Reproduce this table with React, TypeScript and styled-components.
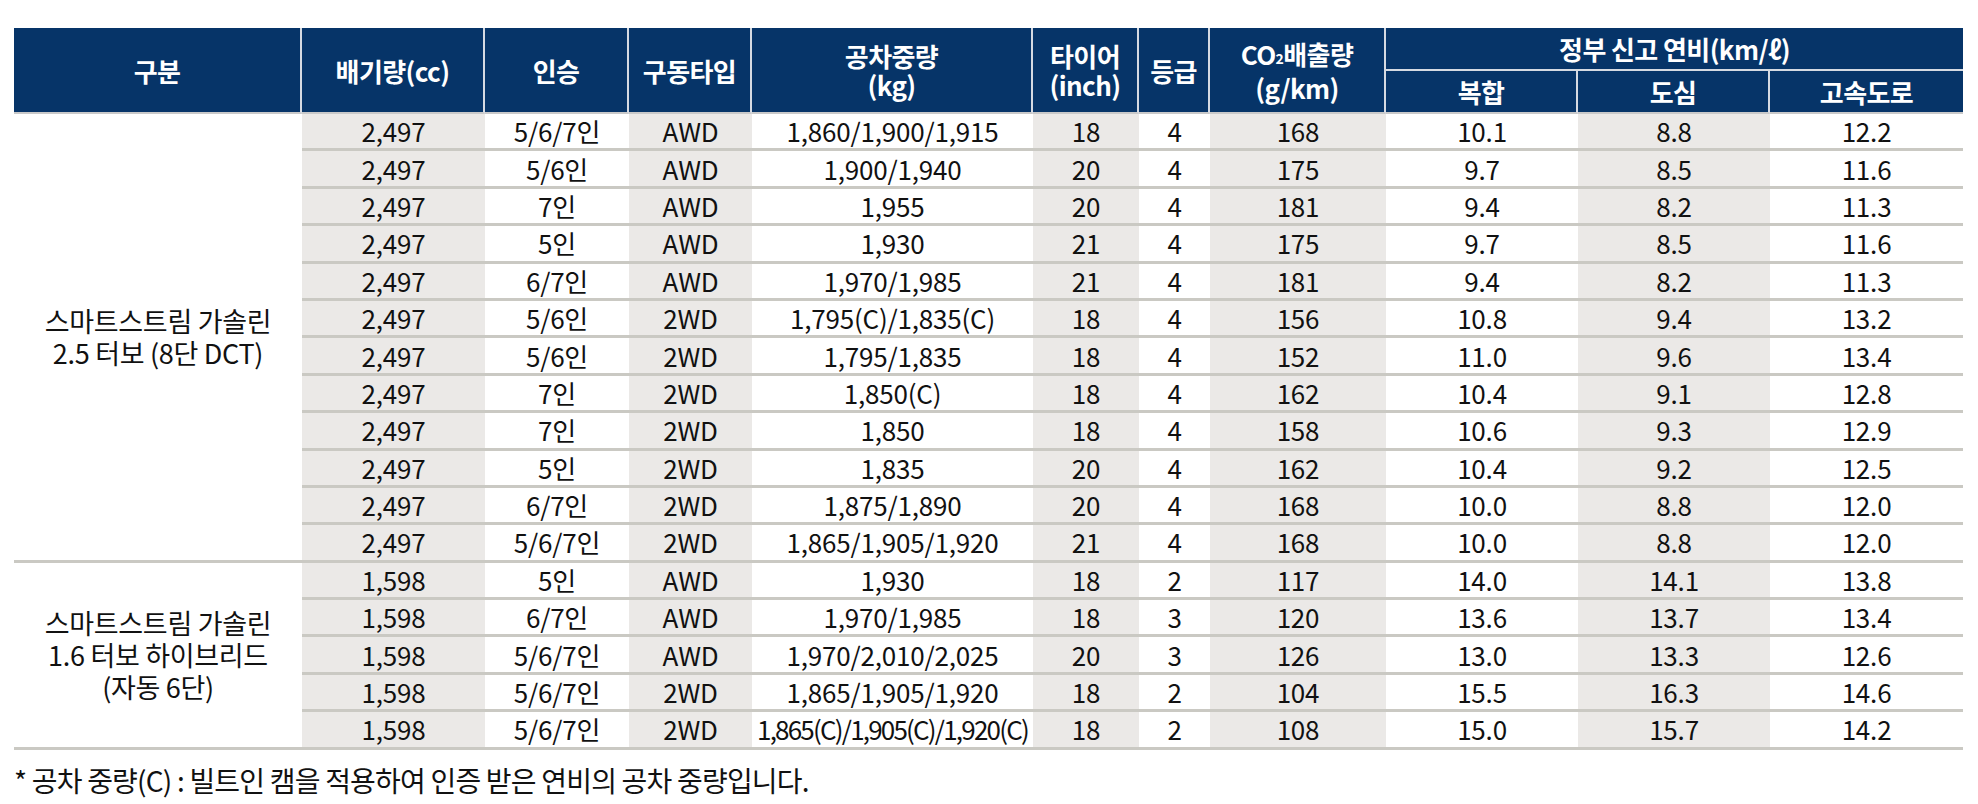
import styled, { createGlobalStyle } from 'styled-components';

type Row = string[];

type Group = {
  label: string[];
  rows: Row[];
};

const groups: Group[] = [
  {
    label: ['스마트스트림 가솔린', '2.5 터보 (8단 DCT)'],
    rows: [
      ['2,497', '5/6/7인', 'AWD', '1,860/1,900/1,915', '18', '4', '168', '10.1', '8.8', '12.2'],
      ['2,497', '5/6인', 'AWD', '1,900/1,940', '20', '4', '175', '9.7', '8.5', '11.6'],
      ['2,497', '7인', 'AWD', '1,955', '20', '4', '181', '9.4', '8.2', '11.3'],
      ['2,497', '5인', 'AWD', '1,930', '21', '4', '175', '9.7', '8.5', '11.6'],
      ['2,497', '6/7인', 'AWD', '1,970/1,985', '21', '4', '181', '9.4', '8.2', '11.3'],
      ['2,497', '5/6인', '2WD', '1,795(C)/1,835(C)', '18', '4', '156', '10.8', '9.4', '13.2'],
      ['2,497', '5/6인', '2WD', '1,795/1,835', '18', '4', '152', '11.0', '9.6', '13.4'],
      ['2,497', '7인', '2WD', '1,850(C)', '18', '4', '162', '10.4', '9.1', '12.8'],
      ['2,497', '7인', '2WD', '1,850', '18', '4', '158', '10.6', '9.3', '12.9'],
      ['2,497', '5인', '2WD', '1,835', '20', '4', '162', '10.4', '9.2', '12.5'],
      ['2,497', '6/7인', '2WD', '1,875/1,890', '20', '4', '168', '10.0', '8.8', '12.0'],
      ['2,497', '5/6/7인', '2WD', '1,865/1,905/1,920', '21', '4', '168', '10.0', '8.8', '12.0'],
    ],
  },
  {
    label: ['스마트스트림 가솔린', '1.6 터보 하이브리드', '(자동 6단)'],
    rows: [
      ['1,598', '5인', 'AWD', '1,930', '18', '2', '117', '14.0', '14.1', '13.8'],
      ['1,598', '6/7인', 'AWD', '1,970/1,985', '18', '3', '120', '13.6', '13.7', '13.4'],
      ['1,598', '5/6/7인', 'AWD', '1,970/2,010/2,025', '20', '3', '126', '13.0', '13.3', '12.6'],
      ['1,598', '5/6/7인', '2WD', '1,865/1,905/1,920', '18', '2', '104', '15.5', '16.3', '14.6'],
      ['1,598', '5/6/7인', '2WD', '1,865(C)/1,905(C)/1,920(C)', '18', '2', '108', '15.0', '15.7', '14.2'],
    ],
  },
];

// column widths, first is the 구분 column
const widths = [288, 183, 144, 123, 281, 106, 71, 176, 192, 192, 193];

const GlobalStyle = createGlobalStyle`
  body {
    margin: 0;
    background: #fff;
    color: #111;
    font-family: "Noto Sans CJK KR", "Noto Sans", sans-serif;
  }
`;

const Page = styled.div`
  padding: 28px 0 0 14px;
`;

const Table = styled.table`
  width: 1949px;
  table-layout: fixed;
  border-collapse: separate;
  border-spacing: 0;
`;

const HeadCell = styled.th<{ $last?: boolean; $split?: boolean }>`
  padding: 0;
  height: 41px;
  background: #063468;
  color: #fff;
  font-size: 26px;
  font-weight: 700;
  line-height: 29px;
  letter-spacing: -0.6px;
  text-align: center;
  vertical-align: middle;
  white-space: nowrap;
  border-right: ${p => (p.$last ? 'none' : '2px solid #d5dae2')};
  border-bottom: ${p => (p.$split ? '2px solid #d5dae2' : '2px solid #c9c9c9')};
`;

const Sub = styled.span`
  font-size: 14px;
  vertical-align: 1px;
`;

const Cell = styled.td<{ $shade: boolean }>`
  padding: 0;
  height: 37.4px;
  box-sizing: border-box;
  background: ${p => (p.$shade ? '#ebe9e7' : '#fff')};
  border-bottom: 3px solid #cac9c3;
  font-size: 26px;
  line-height: 30px;
  text-align: center;
  vertical-align: middle;
  white-space: nowrap;
`;

const Val = styled.span<{ $tight?: boolean }>`
  letter-spacing: ${p => (p.$tight ? '-1.8px' : '-0.2px')};
`;

const GroupCell = styled.td`
  padding: 0;
  background: #fff;
  border-bottom: 3px solid #cac9c3;
  font-size: 27px;
  line-height: 32px;
  letter-spacing: -0.3px;
  text-align: center;
  vertical-align: middle;
`;

const Note = styled.p`
  margin: 10px 0 0;
  font-size: 28px;
  letter-spacing: -0.8px;
`;

const App = () => {
  return (
    <Page>
      <GlobalStyle />
      <Table>
        <colgroup>
          {widths.map((w, i) => (
            <col key={i} style={{ width: w }} />
          ))}
        </colgroup>
        <thead>
          <tr>
            <HeadCell rowSpan={2}>구분</HeadCell>
            <HeadCell rowSpan={2}>배기량(cc)</HeadCell>
            <HeadCell rowSpan={2}>인승</HeadCell>
            <HeadCell rowSpan={2}>구동타입</HeadCell>
            <HeadCell rowSpan={2}>공차중량<br />(kg)</HeadCell>
            <HeadCell rowSpan={2}>타이어<br />(inch)</HeadCell>
            <HeadCell rowSpan={2}>등급</HeadCell>
            <HeadCell rowSpan={2}>CO<Sub>2</Sub>배출량<br />(g/km)</HeadCell>
            <HeadCell colSpan={3} $last $split>정부 신고 연비(km/ℓ)</HeadCell>
          </tr>
          <tr>
            <HeadCell>복합</HeadCell>
            <HeadCell>도심</HeadCell>
            <HeadCell $last>고속도로</HeadCell>
          </tr>
        </thead>
        <tbody>
          {groups.map((g, gi) =>
            g.rows.map((row, ri) => (
              <tr key={`${gi}-${ri}`}>
                {ri === 0 && (
                  <GroupCell rowSpan={g.rows.length}>
                    {g.label.map((l, li) => (
                      <div key={li}>{l}</div>
                    ))}
                  </GroupCell>
                )}
                {row.map((v, ci) => (
                  <Cell key={ci} $shade={ci % 2 === 0}>
                    <Val $tight={v.length > 20}>{v}</Val>
                  </Cell>
                ))}
              </tr>
            ))
          )}
        </tbody>
      </Table>
      <Note>* 공차 중량(C) : 빌트인 캠을 적용하여 인증 받은 연비의 공차 중량입니다.</Note>
    </Page>
  );
};

export default App;
